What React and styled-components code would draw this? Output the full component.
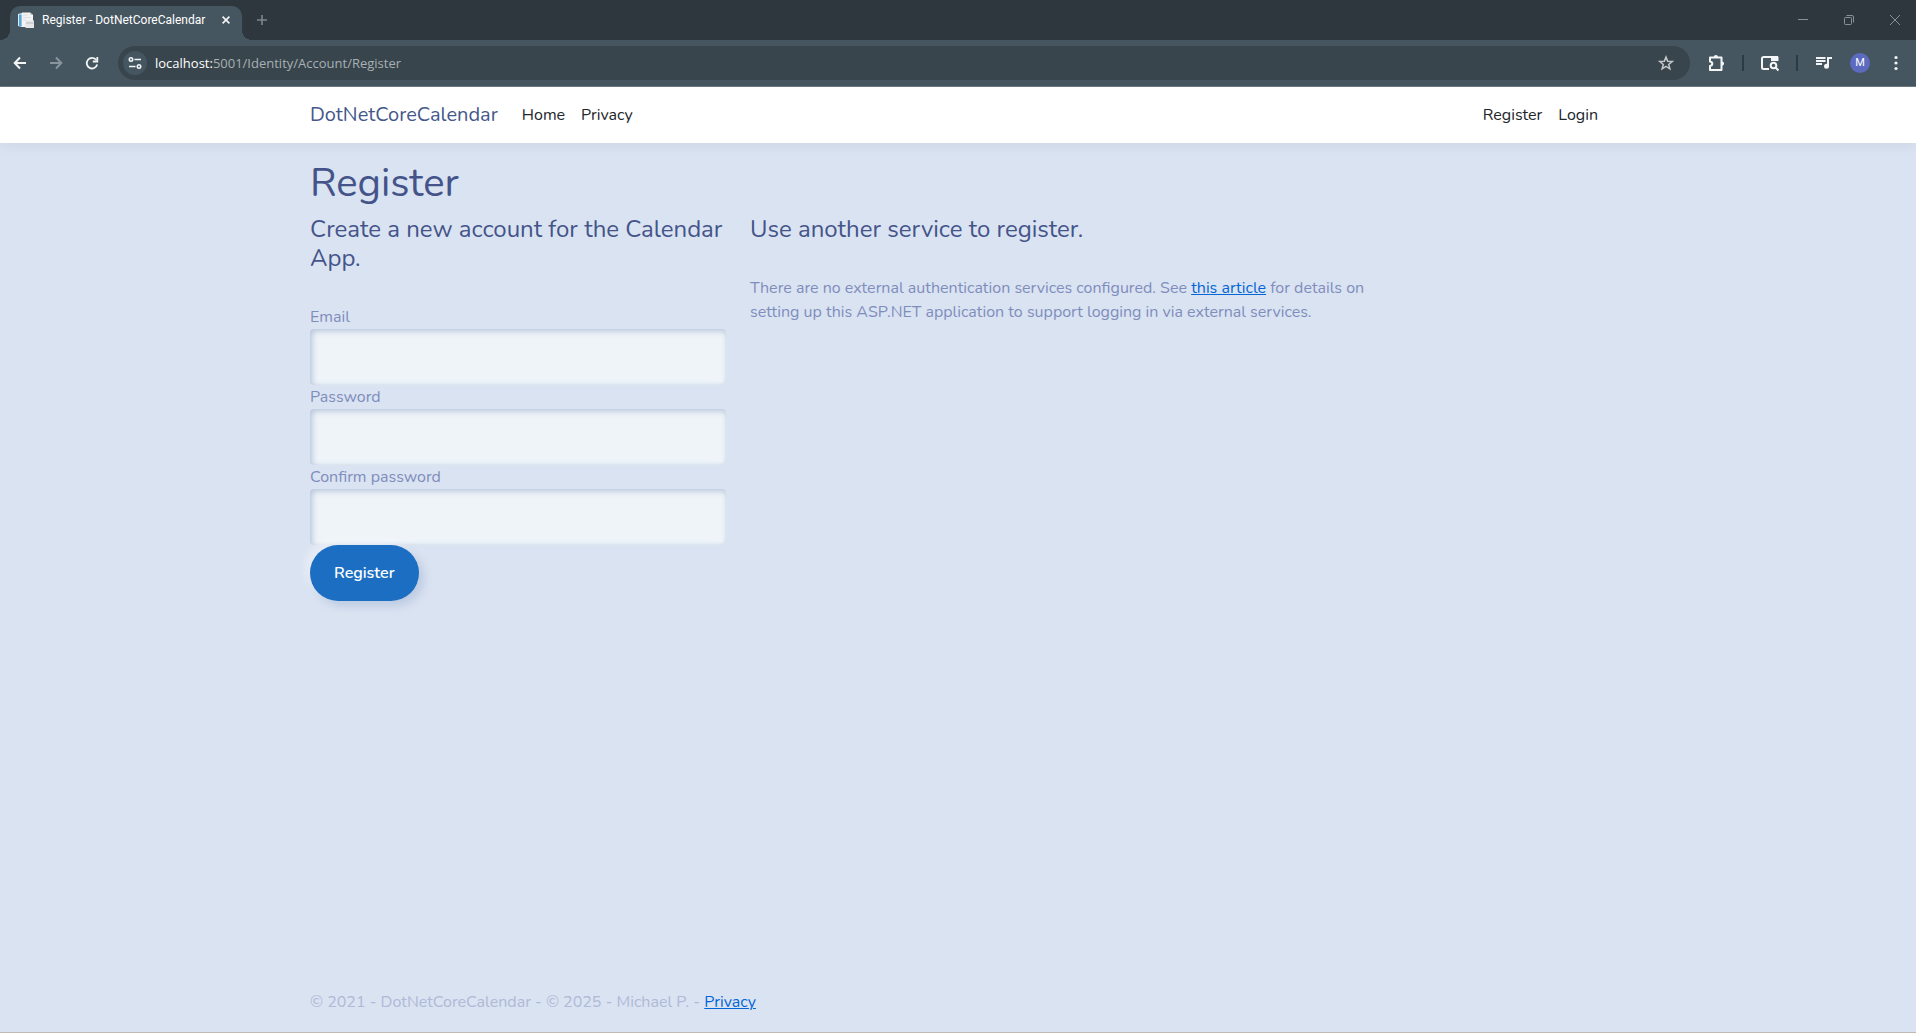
import React from "react";
import styled, { createGlobalStyle } from "styled-components";

const GlobalStyle = createGlobalStyle`
  *, *::before, *::after { box-sizing: border-box; }
  body {
    margin: 0;
    background: #dae3f1;
    font-family: Nunito, Lato, sans-serif;
    font-size: 16px;
    line-height: 24px;
    color: #7f8dbd;
  }
  button, input { font: inherit; }
`;

const Screen = styled.div`
  display: flex;
  flex-direction: column;
  min-height: 100vh;
  border-bottom: 1px solid #c3b8b3;
`;

/* ---------- browser chrome ---------- */

const Chrome = styled.div`
  font-family: "Segoe UI", Roboto, sans-serif;
  background: #455660;
  border-bottom: 1px solid #6c7a84;
`;

const TabStrip = styled.div`
  display: flex;
  align-items: flex-end;
  height: 40px;
  padding-left: 10px;
  background: #2d373d;
`;

const Tab = styled.div`
  position: relative;
  display: flex;
  align-items: center;
  width: 232px;
  height: 34px;
  padding: 0 8px 6px;
  border-radius: 10px 10px 0 0;
  background: #455660;
  color: #ffffff;
  font-size: 12px;

  &::before,
  &::after {
    content: "";
    position: absolute;
    bottom: 0;
    width: 10px;
    height: 10px;
  }
  &::before {
    right: 100%;
    background: radial-gradient(circle at 0 0, transparent 10px, #455660 10px);
  }
  &::after {
    left: 100%;
    background: radial-gradient(circle at 100% 0, transparent 10px, #455660 10px);
  }
`;

const TabTitle = styled.span`
  flex: 1;
  margin-left: 8px;
  white-space: nowrap;
`;

const IconButton = styled.button`
  display: flex;
  align-items: center;
  justify-content: center;
  flex: none;
  width: ${(p) => p.$w || 28}px;
  height: ${(p) => p.$h || 28}px;
  padding: 0;
  border: 0;
  border-radius: 14px;
  background: none;
  color: ${(p) => p.$color || "#f3f5f6"};
  cursor: pointer;
`;

const WindowControls = styled.div`
  display: flex;
  gap: 4px;
  margin-left: auto;
`;

const Toolbar = styled.div`
  display: flex;
  align-items: center;
  gap: 12px;
  height: 46px;
  padding: 0 6px;
`;

const ToolGroup = styled.div`
  display: flex;
  align-items: center;
  gap: 8px;
`;

const AddressBar = styled.div`
  display: flex;
  align-items: center;
  flex: 1;
  height: 34px;
  padding: 0 10px 0 5px;
  border-radius: 17px;
  background: #38454c;
`;

const SiteInfo = styled(IconButton)`
  border-radius: 50%;
  background: #455660;
`;

const Url = styled.div`
  flex: 1;
  margin-left: 8px;
  font-family: "Segoe UI", "Open Sans", sans-serif;
  font-size: 13px;
  color: #a9b0b4;
  outline: none;
`;

const Host = styled.span`
  color: #ffffff;
`;

const Divider = styled.span`
  width: 2px;
  height: 16px;
  margin: 0 4px;
  background: #2d3a41;
`;

const Avatar = styled.span`
  width: 20px;
  height: 20px;
  border-radius: 50%;
  background: #5c6bc0;
  color: #ffffff;
  font-size: 11px;
  line-height: 20px;
  text-align: center;
`;

/* ---------- page ---------- */

const Container = styled.div`
  width: 100%;
  max-width: 1320px;
  margin: 0 auto;
  padding: 0 12px;
`;

const Header = styled.header`
  background: #ffffff;
  box-shadow: 0 4px 12px rgba(0, 0, 0, 0.05);
`;

const Navbar = styled(Container).attrs({ as: "nav" })`
  display: flex;
  align-items: center;
  height: 56px;
`;

const Brand = styled.a`
  margin-right: 16px;
  color: #44578a;
  font-size: 20px;
  text-decoration: none;
`;

const NavLinks = styled.div`
  display: flex;
  flex-grow: ${(p) => (p.$grow ? 1 : 0)};
`;

const NavLink = styled.a`
  padding: 8px;
  color: #212529;
  text-decoration: none;
`;

const Main = styled(Container).attrs({ as: "main" })`
  flex: 1;
  padding-top: 16px;
  padding-bottom: 16px;
`;

const Title = styled.h1`
  margin: 0 0 8px;
  color: #44548a;
  font-size: 40px;
  font-weight: 400;
  line-height: 48px;
`;

const Columns = styled.div`
  display: flex;
  gap: 24px;
`;

const FormColumn = styled.section`
  width: calc((100% + 24px) / 3 - 24px);
`;

const ServiceColumn = styled.section`
  width: calc((100% + 24px) / 2 - 24px);
`;

const Subtitle = styled.h3`
  margin: 0 0 32px;
  color: #44548a;
  font-size: 24px;
  font-weight: 400;
  line-height: 29px;
`;

const Text = styled.p`
  margin: 0;
`;

const Link = styled.a`
  color: #0366d6;
`;

const Field = styled.div`
  display: flex;
  flex-direction: column;
`;

const Input = styled.input`
  width: 100%;
  height: 56px;
  padding: 0 16px;
  border: 0;
  border-radius: 4px;
  background: #eff4f9;
  box-shadow: inset 2px 2px 6px #b4c3d9, inset -1px -1px 3px #e6ebf3;
  color: #44548a;
`;

const SubmitButton = styled.button`
  height: 56px;
  padding: 0 24px;
  border: 0;
  border-radius: 28px;
  background: #1b6ec2;
  box-shadow: 5px 5px 10px #bccae2, -5px -5px 10px rgba(255, 255, 255, 0.4);
  color: #ffffff;
  font-weight: 600;
  cursor: pointer;
`;

const Footer = styled.footer`
  color: #afb9d8;
  line-height: 60px;
`;

/* ---------- icons ---------- */

const Icon = ({ size = 16, width = 2, children }) => (
  <svg
    width={size}
    height={size}
    viewBox={`0 0 ${size} ${size}`}
    fill="none"
    stroke="currentColor"
    strokeWidth={width}
    aria-hidden="true"
  >
    {children}
  </svg>
);

const Favicon = () => (
  <svg width="16" height="16" viewBox="0 0 16 16" aria-hidden="true">
    <path d="M0 2 4 1v14l-4-1z" fill="#d9eefa" />
    <path d="M1 2.500h2.600v11.700H1z" fill="#5aa5d6" />
    <path d="M4 .5h8l3 2.500v12H4z" fill="#f4f4f4" />
    <path d="M12 .5v2.500h3z" fill="#c9ced2" />
    <path d="M5 3h5M5 5.500h8M5 8h3" stroke="#dcdfe1" />
    <path d="M7.500 8.500h8.500V16H7.500z" fill="#e4e6e8" />
    <path d="M8 11h7.500" stroke="#b6bcc1" />
  </svg>
);

const BackIcon = () => (
  <Icon><path d="M14 8H3M8 2.500 2.700 8 8 13.500" /></Icon>
);
const ForwardIcon = () => (
  <Icon><path d="M2 8h11M8 2.500 13.300 8 8 13.500" /></Icon>
);
const ReloadIcon = () => (
  <Icon width={1.8}>
    <path d="M13.200 9.500A5.300 5.300 0 1 1 12.300 5" />
    <path d="M13.300 2v4.500H8.800" />
  </Icon>
);
const TuneIcon = () => (
  <Icon width={1.6}>
    <circle cx="4" cy="4.500" r="1.700" />
    <path d="M7.500 4.500H14M2 11.500h6.500" />
    <circle cx="12" cy="11.500" r="1.700" />
  </Icon>
);
const StarIcon = () => (
  <Icon width={1.5}>
    <path d="m8 2 1.700 4.200 4.500.3-3.500 2.900 1.200 4.400L8 11.400l-3.900 2.400 1.200-4.400L1.800 6.500l4.500-.3z" />
  </Icon>
);
const ExtensionIcon = () => (
  <Icon size={18}>
    <path d="M3 3.500h11.500v12.500H3v-4c1.600-.3 2.300-1.200 2.300-2.300S4.600 7.700 3 7.400z" strokeLinejoin="round" />
    <path d="M6.800 3a2.100 2.100 0 0 1 4.200 0zM15 7.500a2.100 2.100 0 0 1 0 4.200z" fill="currentColor" stroke="none" />
  </Icon>
);
const SidePanelSearchIcon = () => (
  <Icon size={18}>
    <path d="M8 15H2.500A1.500 1.500 0 0 1 1 13.500v-9A1.500 1.500 0 0 1 2.500 3H16v3.500" />
    <path d="M10 2h6a1.500 1.500 0 0 1 1.500 1.500V7H10z" fill="currentColor" stroke="none" />
    <circle cx="12.500" cy="11.500" r="2.800" />
    <path d="m14.500 13.500 3 3" />
  </Icon>
);
const MusicIcon = () => (
  <Icon>
    <path d="M0 3h9.500M0 6h9.500M0 9h6" />
    <path d="M12 11V3h4" />
    <circle cx="10.500" cy="11.300" r="2.500" fill="currentColor" stroke="none" />
  </Icon>
);
const MoreIcon = () => (
  <Icon>
    <g fill="currentColor" stroke="none">
      <circle cx="8" cy="2.500" r="1.600" />
      <circle cx="8" cy="8" r="1.600" />
      <circle cx="8" cy="13.500" r="1.600" />
    </g>
  </Icon>
);
const CloseTabIcon = () => (
  <Icon size={8} width={1.6}><path d="m.6.6 6.800 6.800M7.400.6.6 7.400" /></Icon>
);
const CloseWindowIcon = () => (
  <Icon size={10} width={1}><path d="m0 0 10 10M10 0 0 10" /></Icon>
);
const PlusIcon = () => (
  <Icon size={12} width={1.6}><path d="M6 1v10M1 6h10" /></Icon>
);
const MinimizeIcon = () => (
  <Icon size={10} width={1}><path d="M0 4.500h10" /></Icon>
);
const RestoreIcon = () => (
  <Icon size={10} width={1}>
    <rect x=".5" y="2.500" width="7" height="7" rx=".8" />
    <path d="M2.500.5H8A1.500 1.500 0 0 1 9.500 2v5.500" />
  </Icon>
);

const fields = [
  { id: "email", label: "Email", type: "email" },
  { id: "password", label: "Password", type: "password" },
  { id: "confirm-password", label: "Confirm password", type: "password" },
];

function BrowserChrome() {
  return (
    <Chrome>
      <TabStrip>
        <Tab>
          <Favicon />
          <TabTitle>Register - DotNetCoreCalendar</TabTitle>
          <IconButton $w={16} $h={16} aria-label="Close tab"><CloseTabIcon /></IconButton>
        </Tab>
        <IconButton $w={40} $h={40} $color="#7e878c" aria-label="New tab"><PlusIcon /></IconButton>
        <WindowControls>
          <IconButton $w={42} $h={40} $color="#889197" aria-label="Minimize"><MinimizeIcon /></IconButton>
          <IconButton $w={42} $h={40} $color="#889197" aria-label="Restore"><RestoreIcon /></IconButton>
          <IconButton $w={42} $h={40} $color="#889197" aria-label="Close window"><CloseWindowIcon /></IconButton>
        </WindowControls>
      </TabStrip>
      <Toolbar>
        <ToolGroup>
          <IconButton aria-label="Back"><BackIcon /></IconButton>
          <IconButton $color="#89949b" aria-label="Forward"><ForwardIcon /></IconButton>
          <IconButton aria-label="Reload"><ReloadIcon /></IconButton>
        </ToolGroup>
        <AddressBar>
          <SiteInfo $w={24} $h={24} aria-label="Site information"><TuneIcon /></SiteInfo>
          <Url role="textbox" aria-label="Address" tabIndex={0}>
            <Host>localhost:</Host>5001/Identity/Account/Register
          </Url>
          <IconButton $color="#c3c7ca" aria-label="Bookmark this page"><StarIcon /></IconButton>
        </AddressBar>
        <ToolGroup>
          <IconButton aria-label="Extensions"><ExtensionIcon /></IconButton>
          <Divider />
          <IconButton aria-label="Side panel search"><SidePanelSearchIcon /></IconButton>
          <Divider />
          <IconButton aria-label="Media controls"><MusicIcon /></IconButton>
          <IconButton aria-label="Profile"><Avatar>M</Avatar></IconButton>
          <IconButton aria-label="Menu"><MoreIcon /></IconButton>
        </ToolGroup>
      </Toolbar>
    </Chrome>
  );
}

export default function App() {
  return (
    <Screen>
      <GlobalStyle />
      <BrowserChrome />
      <Header>
        <Navbar>
          <Brand href="#">DotNetCoreCalendar</Brand>
          <NavLinks $grow>
            <NavLink href="#">Home</NavLink>
            <NavLink href="#">Privacy</NavLink>
          </NavLinks>
          <NavLinks>
            <NavLink href="#">Register</NavLink>
            <NavLink href="#">Login</NavLink>
          </NavLinks>
        </Navbar>
      </Header>
      <Main>
        <Title>Register</Title>
        <Columns>
          <FormColumn>
            <Subtitle>Create a new account for the Calendar App.</Subtitle>
            <form onSubmit={(e) => e.preventDefault()}>
              {fields.map((f) => (
                <Field key={f.id}>
                  <label htmlFor={f.id}>{f.label}</label>
                  <Input id={f.id} type={f.type} />
                </Field>
              ))}
              <SubmitButton type="submit">Register</SubmitButton>
            </form>
          </FormColumn>
          <ServiceColumn>
            <Subtitle>Use another service to register.</Subtitle>
            <Text>
              There are no external authentication services configured. See{" "}
              <Link href="#">this article</Link> for details on setting up this ASP.NET
              application to support logging in via external services.
            </Text>
          </ServiceColumn>
        </Columns>
      </Main>
      <Footer>
        <Container>
          © 2021 - DotNetCoreCalendar - © 2025 - Michael P. - <Link href="#">Privacy</Link>
        </Container>
      </Footer>
    </Screen>
  );
}
